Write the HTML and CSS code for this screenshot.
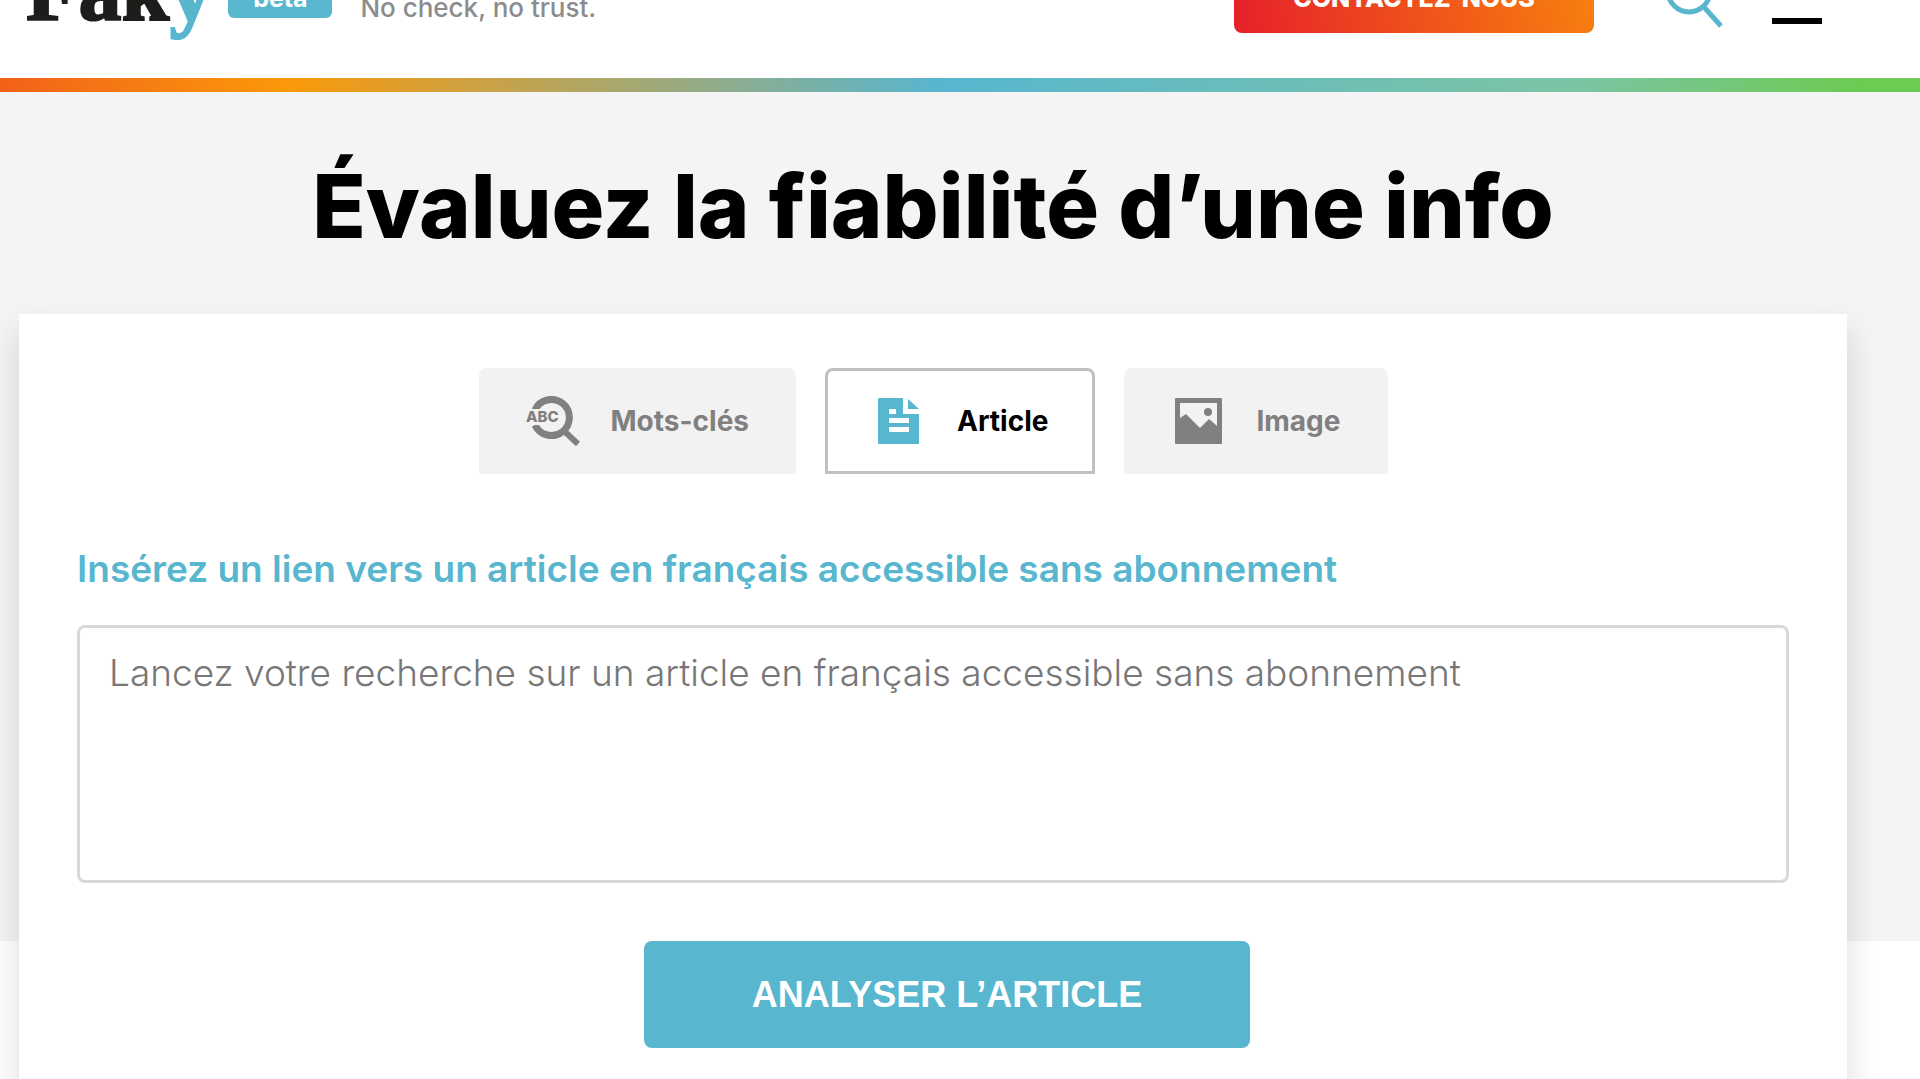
FILE: index.html
```html
<!DOCTYPE html>
<html lang="fr">
  <head>
    <meta charset="UTF-8" />
    <meta name="viewport" content="width=device-width, initial-scale=1.0" />
    <title>Faky - Évaluez la fiabilité d’une info</title>
    <link rel="stylesheet" href="styles.css">
  </head>
  <body>
    <header class="site-header">
      <a class="logo" href="#">Fak<span class="logo-y">y</span></a>
      <span class="badge">beta</span>
      <p class="tagline">No check, no trust.</p>

      <a class="contact" href="#">CONTACTEZ-NOUS</a>
      <button type="button" class="icon-button search" aria-label="Rechercher">
        <svg width="58" height="60" viewBox="0 0 58 60" fill="none" stroke="#58b6cf" stroke-width="5">
          <circle cx="23" cy="23" r="21" />
          <path d="M37 38 L55 58" />
        </svg>
      </button>
      <button type="button" class="icon-button menu" aria-label="Menu">
        <span></span>
        <span></span>
      </button>
    </header>
    <div class="rainbow"></div>

    <main>
      <h1>Évaluez la fiabilité d’une info</h1>

      <form class="card">
        <div class="tabs">
          <button type="button" class="tab">
            <svg width="54" height="50" viewBox="0 0 54 50">
              <path d="M9 14 A18 18 0 1 1 9 29" fill="none" stroke="#808080" stroke-width="7" />
              <path d="M37 34 L52 48" stroke="#808080" stroke-width="6" />
              <rect x="0" y="13" width="35" height="16" fill="#f2f2f2" />
              <text x="0" y="26" class="abc">ABC</text>
            </svg>
            Mots-clés
          </button>
          <button type="button" class="tab active">
            <svg width="54" height="46" viewBox="-6 0 54 46">
              <path d="M1 0 H25 V16 H41 V45 Q41 46 40 46 H1 Q0 46 0 45 V1 Q0 0 1 0 Z" fill="#58b6cf" />
              <path d="M30 1 V11 H41 Z" fill="#58b6cf" />
              <path d="M11 11 H18 V16 H11 Z M11 20 H31 V25 H11 Z M11 29 H31 V34 H11 Z" fill="#fff" />
            </svg>
            Article
          </button>
          <button type="button" class="tab">
            <svg width="54" height="46" viewBox="-4 0 54 46">
              <rect width="47" height="46" rx="1" fill="#808080" />
              <path d="M5 5 H42 V28 L34 21 L25 30 L11 16 L5 20 Z" fill="#f2f2f2" />
              <circle cx="33" cy="14" r="4" fill="#808080" />
            </svg>
            Image
          </button>
        </div>

        <label for="article">Insérez un lien vers un article en français accessible sans abonnement</label>
        <textarea id="article" placeholder="Lancez votre recherche sur un article en français accessible sans abonnement"></textarea>

        <div class="actions">
          <button type="submit" class="submit">ANALYSER L’ARTICLE</button>
        </div>
      </form>
    </main>
  </body>
</html>
```
FILE: styles.css
```css
* {
  box-sizing: border-box;
}

body {
  margin: 0;
  font-family: Inter, "Open Sans", sans-serif;
  background-color: #fff;
  overflow-x: hidden;
}

button {
  font-family: inherit;
  cursor: pointer;
}

svg {
  flex: none;
}

/* Header, partly scrolled out of view */
.site-header {
  display: flex;
  align-items: center;
  height: 160px;
  margin-top: -82px;
  padding: 0 98px 0 26px;
}

.logo {
  padding-bottom: 14px;
  color: #1d1d1b;
  font-family: "Liberation Serif", serif;
  font-size: 86px;
  font-weight: bold;
  line-height: 88px;
  text-decoration: none;
  -webkit-text-stroke: 2px;
}

.logo-y {
  color: #58b6cf;
}

.badge {
  width: 104px;
  margin-left: 16px;
  border-radius: 6px;
  background-color: #58b6cf;
  color: #fff;
  font-size: 25px;
  font-weight: 700;
  line-height: 40px;
  text-align: center;
}

.tagline {
  margin: 18px 0 0 28px;
  color: #8c8c8c;
  font-size: 26px;
  font-weight: 500;
}

.contact {
  width: 360px;
  margin-left: auto;
  border-radius: 8px;
  background: linear-gradient(75deg, #e6202a, #f8820e);
  color: #fff;
  font-size: 25px;
  font-weight: 800;
  line-height: 70px;
  text-align: center;
  text-decoration: none;
}

.icon-button {
  padding: 0;
  border: none;
  background: none;
}

.search {
  height: 60px;
  margin-left: 72px;
}

.menu {
  display: flex;
  flex-direction: column;
  gap: 40px;
  width: 50px;
  margin-left: 48px;
}

.menu span {
  height: 6px;
  background-color: #000;
}

.rainbow {
  height: 14px;
  background: linear-gradient(to right, #f2611a, #fb990a 15%, #58b6cf 49%, #7cc4a4 82%, #6ccb52 97%);
}

/* Grey band behind the title and most of the card */
main {
  padding: 64px 73px 0 19px;
  background: linear-gradient(#f4f4f4 849px, #fff 849px);
}

h1 {
  margin: 0 0 58px;
  font-size: 88px;
  font-weight: 800;
  line-height: 100px;
  text-align: center;
}

.card {
  padding: 54px 58px;
  background-color: #fff;
  box-shadow: 0 16px 32px rgba(0, 0, 0, 0.14);
}

.tabs {
  display: flex;
  justify-content: center;
  gap: 29px;
  margin-bottom: 73px;
}

.tab {
  display: flex;
  align-items: center;
  gap: 31px;
  height: 106px;
  padding: 0 44px;
  border: 3px solid #f2f2f2;
  border-radius: 8px 8px 0 0;
  background-color: #f2f2f2;
  color: #808080;
  font-size: 28px;
  font-weight: 700;
}

.tab.active {
  border-color: #c0c0c0;
  background-color: #fff;
  color: #000;
}

.abc {
  fill: #808080;
  font-size: 15px;
  font-weight: 800;
}

label {
  display: block;
  margin-bottom: 34px;
  color: #58b6cf;
  font-size: 37px;
  font-weight: 600;
  line-height: 44px;
}

textarea {
  display: block;
  width: 100%;
  height: 258px;
  padding: 23px 29px;
  border: 3px solid #d9d9d9;
  border-radius: 8px;
  font-family: inherit;
  font-size: 37px;
  font-weight: 300;
  line-height: 44px;
  resize: none;
}

textarea::placeholder {
  color: #777;
}

.actions {
  display: flex;
  justify-content: center;
  margin-top: 58px;
  padding-left: 28px;
}

.submit {
  width: 606px;
  height: 107px;
  border: none;
  border-radius: 8px;
  background-color: #58b6cf;
  color: #fff;
  font-family: "Liberation Sans", sans-serif;
  font-size: 36px;
  font-weight: bold;
}
```
